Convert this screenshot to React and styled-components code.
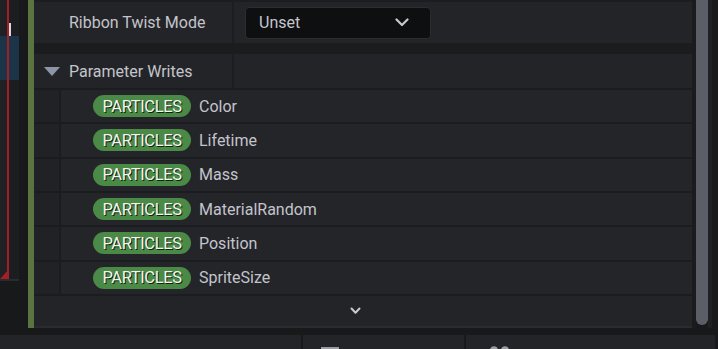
import React from "react";
import styled, { createGlobalStyle } from "styled-components";

const Global = createGlobalStyle`
  html, body { margin: 0; padding: 0; background: #161719; }
  body { width: 718px; height: 349px; overflow: hidden; font-family: Roboto, "Noto Sans", sans-serif; }
  #root { width: 718px; height: 349px; }
  *, *::before, *::after { box-sizing: border-box; }
`;

const Screen = styled.div`
  width: 718px;
  height: 349px;
  display: flex;
  flex-direction: column;
  background: #161719;
  overflow: hidden;
`;

const Workspace = styled.div`
  display: flex;
  height: 328px;
  flex-shrink: 0;
`;

const Timeline = styled.div`
  width: 28px;
  display: flex;
  flex-direction: column;
  background: #18191b;
`;

const TimelineCanvas = styled.div`
  position: relative;
  width: 19px;
  height: 281px;
  background: linear-gradient(to right, #202125 0 8px, #1c1d20 8px 19px);
  border-bottom: 2px solid #2a2b2e;
`;

const Selection = styled.div`
  position: absolute;
  left: 0;
  top: 36px;
  width: 19px;
  height: 44px;
  background: #1b3447;
`;

const Playhead = styled.div`
  position: absolute;
  left: 7px;
  top: 0;
  width: 2px;
  height: 279px;
  background: #a11f25;
`;

const PlayheadFoot = styled.div`
  position: absolute;
  left: 0;
  top: 270px;
  width: 0;
  height: 0;
  border-left: 8px solid transparent;
  border-bottom: 9px solid #a11f25;
`;

const Marker = styled.div`
  position: absolute;
  left: 9px;
  top: 23px;
  width: 2px;
  height: 13px;
  background: #d8d8dc;
`;

const Accent = styled.div`
  width: 6px;
  background: #5b7241;
`;

const Details = styled.div`
  width: 658px;
  display: flex;
  flex-direction: column;
  background: #1b1c1e;
  border-top: 2px solid #1c1d20;
  border-bottom: 2px solid #2a2b2f;
`;

const PropertyRow = styled.div`
  display: flex;
  height: ${(p) => p.$h}px;
  background: #232428;
  flex-shrink: 0;
`;

const NameCell = styled.div`
  width: 200px;
  display: flex;
  align-items: center;
  padding-left: ${(p) => p.$pad}px;
  border-right: 2px solid #1c1d20;
  font-size: 16px;
  color: #c3c4cc;
  white-space: nowrap;
`;

const ValueCell = styled.div`
  flex: 1;
  display: flex;
  align-items: center;
  padding-left: 11px;
`;

const Gap = styled.div`
  height: 11px;
  flex-shrink: 0;
`;

const Combo = styled.div`
  width: 186px;
  height: 32px;
  background: #0e0f11;
  border: 1px solid #2c2d31;
  border-radius: 4px;
  display: flex;
  align-items: center;
  justify-content: space-between;
  padding: 0 21px 0 13px;
  font-size: 16px;
  color: #c5c6cc;
`;

const Caret = styled.svg`
  width: ${(p) => p.$w}px;
  height: ${(p) => p.$h}px;
  display: block;
`;

const Disclosure = styled.svg`
  width: 16px;
  height: 9px;
  display: block;
  margin-right: 9px;
`;

const ChildRow = styled.div`
  display: flex;
  height: 34.33px;
  border-top: 2px solid #1b1c1f;
  flex-shrink: 0;
`;

const Indent = styled.div`
  width: 27px;
  background: #212226;
  border-right: 2px solid #1b1c1f;
`;

const ChildBody = styled.div`
  flex: 1;
  display: flex;
  align-items: center;
  background: #242529;
  padding-left: 32px;
  gap: 8px;
`;

const Namespace = styled.span`
  display: inline-flex;
  align-items: center;
  justify-content: center;
  width: 98px;
  height: 22px;
  border-radius: 11px;
  background: #4a8a46;
  color: #f2f6ee;
  font-size: 16.5px;
  letter-spacing: -0.4px;
  text-shadow: 1px 1px 0 #14210e;
`;

const ParamName = styled.span`
  font-size: 16px;
  color: #c3c4cc;
`;

const Footer = styled.div`
  height: 32px;
  flex-shrink: 0;
  display: flex;
  align-items: center;
  justify-content: center;
  background: #232428;
  border-top: 2px solid #1b1c1f;
  padding-right: 16px;
  padding-top: 1px;
`;

const Gutter = styled.div`
  flex: 1;
  display: flex;
  background: #19191b;
`;

const GutterEdge = styled.div`
  width: ${(p) => p.$w}px;
  background: ${(p) => p.$bg};
`;

const Thumb = styled.div`
  width: 12px;
  height: 325px;
  background: #5b5e67;
  border-radius: 0 0 6px 6px;
`;

const Seam = styled.div`
  height: 7px;
  flex-shrink: 0;
  background: #18191b;
`;

const BottomBar = styled.div`
  height: 14px;
  flex-shrink: 0;
  display: flex;
  gap: 2px;
  background: #18191b;
  padding-right: 3px;
`;

const Pane = styled.div`
  width: ${(p) => (p.$w ? `${p.$w}px` : "auto")};
  flex: ${(p) => (p.$w ? "none" : 1)};
  background: #232428;
  padding-left: ${(p) => p.$pad || 0}px;
  padding-top: ${(p) => p.$top || 0}px;
  overflow: hidden;
`;

const PaneIcon = styled.svg`
  display: block;
`;

const params = ["Color", "Lifetime", "Mass", "MaterialRandom", "Position", "SpriteSize"];

export default function App() {
  return (
    <>
      <Global />
      <Screen>
        <Workspace>
          <Timeline>
            <TimelineCanvas>
              <Selection />
              <Playhead />
              <PlayheadFoot />
              <Marker />
            </TimelineCanvas>
          </Timeline>
          <Accent />
          <Details>
            <PropertyRow $h={41}>
              <NameCell $pad={35}>Ribbon Twist Mode</NameCell>
              <ValueCell>
                <Combo>
                  <span>Unset</span>
                  <Caret $w={14} $h={9} viewBox="0 0 14 9">
                    <path d="M1.5 1.5 L7 7 L12.5 1.5" fill="none" stroke="#c8c9ce" strokeWidth="2.2" strokeLinecap="round" strokeLinejoin="round" />
                  </Caret>
                </Combo>
              </ValueCell>
            </PropertyRow>
            <Gap />
            <PropertyRow $h={34}>
              <NameCell $pad={10}>
                <Disclosure viewBox="0 0 16 9">
                  <path d="M0 0 H16 L8 9 Z" fill="#8e95aa" />
                </Disclosure>
                Parameter Writes
              </NameCell>
              <ValueCell />
            </PropertyRow>
            {params.map((p) => (
              <ChildRow key={p}>
                <Indent />
                <ChildBody>
                  <Namespace>PARTICLES</Namespace>
                  <ParamName>{p}</ParamName>
                </ChildBody>
              </ChildRow>
            ))}
            <Footer>
              <Caret $w={11} $h={8} viewBox="0 0 11 8">
                <path d="M1.5 1.5 L5.5 5.8 L9.5 1.5" fill="none" stroke="#c8c9ce" strokeWidth="2" strokeLinecap="round" strokeLinejoin="round" />
              </Caret>
            </Footer>
          </Details>
          <Gutter>
            <GutterEdge $w={4} $bg="#1a1b1d" />
            <Thumb />
            <GutterEdge $w={4} $bg="#1f2023" />
          </Gutter>
        </Workspace>
        <Seam />
        <BottomBar>
          <Pane $w={301} />
          <Pane $w={161} $pad={18} $top={12}>
            <PaneIcon width="18" height="2" viewBox="0 0 18 2">
              <rect x="0" y="0" width="18" height="2" fill="#9a9ca3" />
            </PaneIcon>
          </Pane>
          <Pane $pad={24} $top={11}>
            <PaneIcon width="19" height="3" viewBox="0 0 19 3">
              <circle cx="4" cy="4" r="3.8" fill="#9a9ca3" />
              <circle cx="15" cy="4" r="3.8" fill="#9a9ca3" />
            </PaneIcon>
          </Pane>
        </BottomBar>
      </Screen>
    </>
  );
}
